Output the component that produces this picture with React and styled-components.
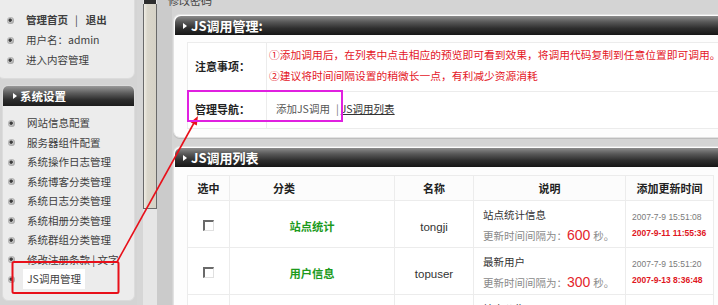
import React from 'react';
import styled, { createGlobalStyle } from 'styled-components';

const Global = createGlobalStyle`
  html, body { margin: 0; padding: 0; }
  body {
    background: #d4d4d4;
    font-family: "Noto Sans CJK SC", "Liberation Sans", sans-serif;
    overflow: hidden;
  }
`;

const Page = styled.div`
  position: relative;
  width: 718px;
  height: 305px;
  overflow: hidden;
  display: flex;
  background: #d4d4d4;
`;

/* ---------- Sidebar ---------- */
const Sidebar = styled.aside`
  width: 137px;
  flex: none;
  display: flex;
  flex-direction: column;
`;

const TopBox = styled.div`
  margin: -6px 0 0 -3px;
  width: 138px;
  box-sizing: border-box;
  background: #ececec;
  border: 1px solid #dcdcdc;
  border-radius: 0 0 7px 7px;
  padding: 15px 0 8px 9px;
`;

const SideBox = styled.div`
  margin: 6px 0 0 2px;
  width: 133px;
  box-sizing: border-box;
  background: #ececec;
  border: 1px solid #dcdcdc;
  border-radius: 6px;
  padding: 0 0 11px 0;
`;

const SideHeader = styled.div`
  height: 20px;
  display: flex;
  align-items: center;
  gap: 3px;
  padding-left: 10px;
  border-radius: 5px 5px 0 0;
  background: linear-gradient(#9a9a9a 0%, #5e5e5e 35%, #2c2c2c 70%, #1c1c1c 100%);
  color: #fff;
  font-size: 11.5px;
  font-weight: 700;
  margin-bottom: 7.25px;
`;

const Tri = styled.span`
  width: 0;
  height: 0;
  border-left: 4px solid #fff;
  border-top: 3.5px solid transparent;
  border-bottom: 3.5px solid transparent;
`;

const SideList = styled.div`
  padding-left: 5px;
`;

const Item = styled.div`
  height: ${p => p.$h}px;
  display: flex;
  align-items: center;
  gap: 12px;
  font-size: 10.5px;
  color: #3e3e3e;
  font-weight: ${p => (p.$bold ? 700 : 400)};
  white-space: nowrap;
  overflow: hidden;
`;

const Bullet = styled.span`
  width: 7px;
  height: 7px;
  flex: none;
  border-radius: 50%;
  background: radial-gradient(circle at 45% 45%, #3d3d3d 0 1.3px, #c4c4c4 2px, #8a8a8a 100%);
`;

const ItemLabel = styled.span`
  padding: ${p => (p.$active ? '2px 4px' : '0')};
  margin-left: ${p => (p.$active ? '-4px' : '0')};
  background: ${p => (p.$active ? '#ffffff' : 'transparent')};
  line-height: 16px;
`;

const Pipe = styled.span`
  margin: 0 8px 0 7px;
  font-weight: 400;
`;

/* ---------- Gutter / scrollbar ---------- */
const Gutter = styled.div`
  width: 35px;
  flex: none;
  display: flex;
`;

const GutterStrip = styled.div`
  width: ${p => p.$w}px;
  background: ${p => p.$bg};
`;

const Scrollbar = styled.div`
  width: 14px;
  display: flex;
  flex-direction: column;
  background: #e6e6e6;
`;

const ArrowStub = styled.div`
  height: 4px;
  margin: 0 1px;
  background: #2e2e2e;
`;

const Thumb = styled.div`
  height: 205px;
  box-sizing: border-box;
  border: 1px solid #6a6a6a;
  border-top: none;
  background: linear-gradient(90deg, #f0ede4 0%, #dad6ca 30%, #d6d2c6 100%);
`;

/* ---------- Content ---------- */
const Content = styled.main`
  flex: 1;
  min-width: 0;
  display: flex;
  flex-direction: column;
`;

const TopNote = styled.div`
  height: 13px;
  margin: -6px 0 0 -4px;
  font-size: 11px;
  line-height: 13px;
  color: #444;
`;

const Panel = styled.section`
  margin-top: ${p => p.$mt}px;
  margin-left: 1px;
  background: #fdfdfd;
  border: 1px solid #e2e2e2;
  border-right: none;
  border-radius: 7px 0 0 7px;
  padding: 1px 0 ${p => p.$pb}px 1px;
  box-shadow: 0 1px 0 #bdbdbd;
`;

const PanelHeader = styled.div`
  height: 19px;
  display: flex;
  align-items: center;
  gap: 4px;
  padding-left: 8px;
  border-radius: 6px 0 0 0;
  background: linear-gradient(#8c8c8c 0%, #5a5a5a 30%, #2e2e2e 65%, #161616 100%);
  color: #fff;
  font-size: 13px;
  font-weight: 700;
`;

const PanelBody = styled.div`
  padding: ${p => p.$pt}px 0 0 12px;
`;

const InfoTable = styled.table`
  border-collapse: collapse;
  table-layout: fixed;
  width: 560px;
  background: #fff;
  td {
    border: 1px solid #ececec;
    padding: 0;
  }
`;

const LabelCell = styled.td`
  width: 71px;
  height: ${p => p.$h}px;
  padding: 0 0 ${p => p.$shift}px 7px !important;
  font-size: 11px;
  font-weight: 700;
  color: #222;
`;

const NoteCell = styled.td`
  padding: 0 0 4px 2px !important;
  font-size: 10.75px;
  color: #e4151f;
  line-height: 21px;
  white-space: nowrap;
`;

const NavCell = styled.td`
  padding: 0 0 3px 9px !important;
  font-size: 10.5px;
  color: #555;
  white-space: nowrap;
`;

const NavSep = styled.span`
  margin: 0 2px 0 6px;
  color: #777;
`;

const NavLink = styled.span`
  color: #333;
  text-decoration: underline;
`;

const ListTable = styled.table`
  border-collapse: collapse;
  table-layout: fixed;
  width: 526px;
  background: #fff;
  th, td {
    border: 1px solid #ececec;
    padding: 0;
  }
`;

const Th = styled.th`
  height: 24px;
  font-size: 11px;
  font-weight: 700;
  color: #222;
  text-align: ${p => p.$align || 'center'};
  padding-left: ${p => p.$pl || 0}px !important;
  background: #fcfcfc;
  white-space: nowrap;
`;

const Td = styled.td`
  height: 46px;
  text-align: ${p => p.$align || 'center'};
  vertical-align: ${p => p.$valign || 'middle'};
  padding-left: ${p => p.$pl || 0}px !important;
  white-space: nowrap;
  overflow: hidden;
`;

const Check = styled.span`
  display: inline-block;
  width: 8px;
  height: 8px;
  margin-top: 2px;
  border-top: 2px solid #6a6a6a;
  border-left: 2px solid #6a6a6a;
  border-right: 1px solid #e0e0e0;
  border-bottom: 1px solid #e0e0e0;
  background: #fff;
`;

const Cat = styled.span`
  color: #1c9a1c;
  font-weight: 700;
  font-size: 11.3px;
`;

const Name = styled.span`
  font-family: "Liberation Sans", Arial, sans-serif;
  font-size: 11.5px;
  color: #333;
`;

const DescTitle = styled.div`
  font-size: 10.5px;
  color: #333;
  line-height: 20px;
  margin-top: 4px;
`;

const DescSub = styled.div`
  font-size: 10.5px;
  color: #8a8a8a;
  line-height: 20px;
`;

const Num = styled.span`
  font-family: "Liberation Sans", Arial, sans-serif;
  font-size: 14px;
  color: #e3262c;
  margin-right: 3px;
`;

const TimeLine = styled.div`
  font-family: "Liberation Sans", Arial, sans-serif;
  font-size: 8.5px;
  line-height: 16px;
  color: ${p => (p.$red ? '#e0161e' : '#7a7a7a')};
  font-weight: ${p => (p.$red ? 700 : 400)};
  margin-top: ${p => p.$mt || 0}px;
`;

const Overlay = styled.svg`
  position: absolute;
  left: 0;
  top: 0;
  width: 718px;
  height: 305px;
  pointer-events: none;
`;

const sideItems = [
  '网站信息配置',
  '服务器组件配置',
  '系统操作日志管理',
  '系统博客分类管理',
  '系统日志分类管理',
  '系统相册分类管理',
  '系统群组分类管理',
  '修改注册条款 | 文字',
  'JS调用管理',
];

const rows = [
  { cat: '站点统计', name: 'tongji', title: '站点统计信息', sec: '600', t1: '2007-7-9 15:51:08', t2: '2007-9-11 11:55:36' },
  { cat: '用户信息', name: 'topuser', title: '最新用户', sec: '300', t1: '2007-7-9 15:51:20', t2: '2007-9-13 8:36:48' },
  { cat: '站点公告', name: '', title: '站点公告', sec: '600', t1: '2007-7-9 15:51:27', t2: '' },
];

export default function App() {
  return (
    <>
      <Global />
      <Page>
        <Sidebar>
          <TopBox>
            <Item $h={20} $bold>
              <Bullet />
              <ItemLabel>
                管理首页<Pipe>|</Pipe>退出
              </ItemLabel>
            </Item>
            <Item $h={20}>
              <Bullet />
              <ItemLabel>用户名：admin</ItemLabel>
            </Item>
            <Item $h={20}>
              <Bullet />
              <ItemLabel>进入内容管理</ItemLabel>
            </Item>
          </TopBox>
          <SideBox>
            <SideHeader>
              <Tri />
              系统设置
            </SideHeader>
            <SideList>
              {sideItems.map((t, i) => (
                <Item key={i} $h={19.5}>
                  <Bullet />
                  <ItemLabel $active={t === 'JS调用管理'}>{t}</ItemLabel>
                </Item>
              ))}
            </SideList>
          </SideBox>
        </Sidebar>

        <Gutter>
          <GutterStrip $w={6} $bg="#d6d6d6" />
          <Scrollbar>
            <ArrowStub />
            <Thumb />
          </Scrollbar>
          <GutterStrip $w={15} $bg="#cbcbcb" />
        </Gutter>

        <Content>
          <TopNote>修改密码</TopNote>
          <Panel $mt={7} $pb={8}>
            <PanelHeader>
              <Tri />
              JS调用管理:
            </PanelHeader>
            <PanelBody $pt={7}>
              <InfoTable>
                <tbody>
                  <tr>
                    <LabelCell $h={46} $shift={2}>注意事项：</LabelCell>
                    <NoteCell>
                      ①添加调用后，在列表中点击相应的预览即可看到效果，将调用代码复制到任意位置即可调用。
                      <br />
                      ②建议将时间间隔设置的稍微长一点，有利减少资源消耗
                    </NoteCell>
                  </tr>
                  <tr>
                    <LabelCell $h={33} $shift={3}>管理导航：</LabelCell>
                    <NavCell>
                      添加JS调用<NavSep>|</NavSep>
                      <NavLink>JS调用列表</NavLink>
                    </NavCell>
                  </tr>
                </tbody>
              </InfoTable>
            </PanelBody>
          </Panel>

          <Panel $mt={8} $pb={0}>
            <PanelHeader>
              <Tri />
              JS调用列表
            </PanelHeader>
            <PanelBody $pt={8}>
              <ListTable>
                <colgroup>
                  <col style={{ width: 42 }} />
                  <col style={{ width: 165 }} />
                  <col style={{ width: 79 }} />
                  <col style={{ width: 152 }} />
                  <col style={{ width: 88 }} />
                </colgroup>
                <thead>
                  <tr>
                    <Th>选中</Th>
                    <Th $align="left" $pl={43}>分类</Th>
                    <Th>名称</Th>
                    <Th>说明</Th>
                    <Th>添加更新时间</Th>
                  </tr>
                </thead>
                <tbody>
                  {rows.map((r, i) => (
                    <tr key={i}>
                      <Td><Check /></Td>
                      <Td><Cat>{r.cat}</Cat></Td>
                      <Td><Name>{r.name}</Name></Td>
                      <Td $align="left" $pl={9} $valign="top">
                        <DescTitle>{r.title}</DescTitle>
                        <DescSub>
                          更新时间间隔为：<Num>{r.sec}</Num>秒。
                        </DescSub>
                      </Td>
                      <Td $align="left" $pl={6} $valign="top">
                        <TimeLine $mt={8}>{r.t1}</TimeLine>
                        <TimeLine $red>{r.t2}</TimeLine>
                      </Td>
                    </tr>
                  ))}
                </tbody>
              </ListTable>
            </PanelBody>
          </Panel>
        </Content>

        <Overlay viewBox="0 0 718 305">
          <rect x="12.5" y="262" width="106" height="31" rx="1.5" fill="none" stroke="#e8101a" strokeWidth="2" />
          <line x1="117" y1="262" x2="194.5" y2="122" stroke="#e8101a" strokeWidth="1.6" />
          <polygon points="198,116 196.8,125.6 190.6,122.2" fill="#e8101a" />
          <rect x="188" y="91" width="154" height="30" fill="none" stroke="#e020e0" strokeWidth="2" />
        </Overlay>
      </Page>
    </>
  );
}
